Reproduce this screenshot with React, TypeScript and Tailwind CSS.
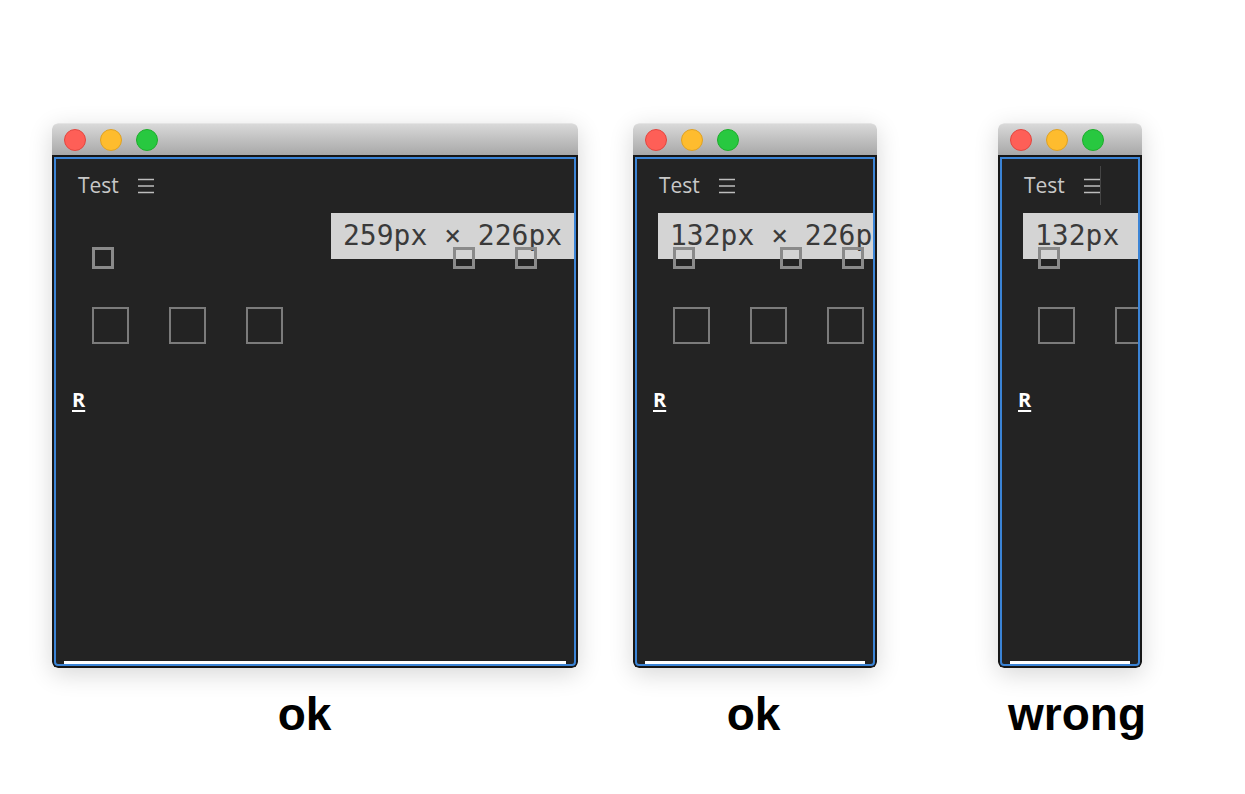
const MONO = { fontFamily: '"DejaVu Sans Mono", monospace' };

interface WindowProps {
  width: string;
  labelLeft: string;
  squaresGap: string;
  divider?: boolean;
}

function Lights() {
  return (
    <div className="flex items-center gap-[14px] pl-[12px]">
      <span className="h-[22px] w-[22px] rounded-full bg-[#fe5f57] border border-[#e2463f]" />
      <span className="h-[22px] w-[22px] rounded-full bg-[#febc2e] border border-[#dfa123]" />
      <span className="h-[22px] w-[22px] rounded-full bg-[#28c840] border border-[#1dad2b]" />
    </div>
  );
}

function TestWindow({ width, labelLeft, squaresGap, divider }: WindowProps) {
  return (
    <div
      className={`${width} flex h-[545px] flex-col overflow-hidden rounded-[6px] shadow-[0_6px_24px_rgba(0,0,0,0.16)]`}
    >
      <div className="flex h-[32px] shrink-0 items-center rounded-t-[6px] border-t border-[#e4e4e4] bg-gradient-to-b from-[#d9d9d9] to-[#a8a8a8]">
        <Lights />
      </div>
      <div className="flex flex-1 flex-col rounded-b-[6px] bg-[#161616] p-[2px]">
        <div className="relative flex flex-1 flex-col overflow-hidden rounded-b-[4px] border-2 border-[#3b84d6] bg-[#232323]">
          {/* header */}
          <div className="flex items-start pl-[22px] pt-[16px]">
            <span className="font-['Open_Sans',sans-serif] text-[21px] font-medium leading-none text-[#c8c8c8]">
              Test
            </span>
            <svg
              width="16"
              height="16"
              viewBox="0 0 16 16"
              className="ml-[19px] mt-[3px] shrink-0"
            >
              <path d="M0 1.5h16M0 8h16M0 14.5h16" stroke="#bdbdbd" strokeWidth="1.7" />
            </svg>
          </div>
          {divider && (
            <div className="absolute left-[98px] top-[7px] h-[39px] w-px bg-[#454545]" />
          )}

          {/* size tooltip */}
          <div
            className={`absolute ${labelLeft} top-[54px] flex h-[46px] items-center whitespace-nowrap bg-[#d4d4d4] pl-[12px] pr-[12px] text-[28px] text-[#3a3a3a]`}
            style={MONO}
          >
            {width === "w-[526px]" ? "259px × 226px" : "132px × 226px"}
          </div>

          {/* small squares */}
          <div className="relative z-10 mt-[51px] flex pl-[36px]">
            <div className="h-[22px] w-[22px] shrink-0 border-[3px] border-[#8a8a8a]" />
            <div className={`${squaresGap} shrink-0`} />
            <div className="flex shrink-0 gap-[40px]">
              <div className="h-[22px] w-[22px] shrink-0 border-[3px] border-[#8a8a8a]" />
              <div className="h-[22px] w-[22px] shrink-0 border-[3px] border-[#8a8a8a]" />
            </div>
          </div>

          {/* big squares */}
          <div className="mt-[38px] flex gap-[40px] pl-[36px]">
            <div className="h-[37px] w-[37px] shrink-0 border-2 border-[#7b7b7b]" />
            <div className="h-[37px] w-[37px] shrink-0 border-2 border-[#7b7b7b]" />
            <div className="h-[37px] w-[37px] shrink-0 border-2 border-[#7b7b7b]" />
          </div>

          <div className="mt-[45px] pl-[16px]">
            <span className="font-['Open_Sans',sans-serif] text-[20px] font-bold leading-none text-white underline underline-offset-[3px]">
              R
            </span>
          </div>

          <div className="flex-1" />
          <div className="mx-[8px] h-[3px] bg-white" />
        </div>
      </div>
    </div>
  );
}

function Caption({ text, shift }: { text: string; shift: string }) {
  return (
    <div className="mt-[23px] flex justify-center">
      <span
        className={`${shift} font-['Liberation_Sans',Arial,sans-serif] text-[46px] font-bold leading-none text-black`}
      >
        {text}
      </span>
    </div>
  );
}

export default function App() {
  return (
    <div className="flex h-[794px] w-[1245px] items-start overflow-hidden bg-white pl-[52px] pt-[123px]">
      <div className="flex w-[526px] flex-col">
        <TestWindow width="w-[526px]" labelLeft="left-[275px]" squaresGap="w-[339px]" />
        <Caption text="ok" shift="mr-[21px]" />
      </div>
      <div className="ml-[55px] flex w-[244px] flex-col">
        <TestWindow width="w-[244px]" labelLeft="left-[21px]" squaresGap="w-[85px]" />
        <Caption text="ok" shift="mr-[3px]" />
      </div>
      <div className="ml-[121px] flex w-[144px] flex-col">
        <TestWindow width="w-[144px]" labelLeft="left-[21px]" squaresGap="w-[85px]" divider />
        <Caption text="wrong" shift="ml-[14px]" />
      </div>
    </div>
  );
}
